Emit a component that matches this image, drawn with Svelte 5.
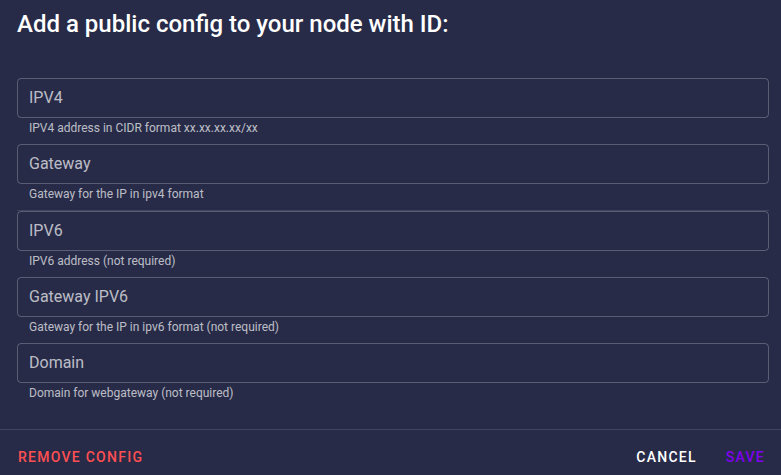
<script>
  let fields = $state([
    { id: 'ipv4', label: 'IPV4', hint: 'IPV4 address in CIDR format xx.xx.xx.xx/xx', value: '' },
    { id: 'gw4', label: 'Gateway', hint: 'Gateway for the IP in ipv4 format', value: '' },
    { id: 'ipv6', label: 'IPV6', hint: 'IPV6 address (not required)', value: '', divided: true },
    { id: 'gw6', label: 'Gateway IPV6', hint: 'Gateway for the IP in ipv6 format (not required)', value: '' },
    { id: 'domain', label: 'Domain', hint: 'Domain for webgateway (not required)', value: '' }
  ]);

  function clear() {
    for (const field of fields) field.value = '';
  }
</script>

<form class="card" onsubmit={(e) => e.preventDefault()}>
  <h1>Add a public config to your node with ID:</h1>

  <div class="fields">
    {#each fields as field (field.id)}
      {#if field.divided}<hr />{/if}
      <div class="field">
        <div class="control">
          <label for={field.id} class:filled={field.value}>{field.label}</label>
          <input id={field.id} type="text" bind:value={field.value} aria-describedby="{field.id}-hint" />
        </div>
        <p id="{field.id}-hint">{field.hint}</p>
      </div>
    {/each}
  </div>

  <footer>
    <button type="button" class="remove" onclick={clear}>Remove config</button>
    <span class="spacer"></span>
    <button type="button">Cancel</button>
    <button type="submit" class="save">Save</button>
  </footer>
</form>

<style>
  :global(body) {
    background: #272b48;
  }

  .card {
    box-sizing: border-box;
    min-height: 100vh;
    overflow: hidden;
    background: #272b48;
    color: #fff;
    font-family: Roboto, sans-serif;
  }

  h1 {
    margin: 0;
    padding: 8px 17px 38px;
    font-size: 24px;
    font-weight: 500;
    line-height: 32px;
  }

  .fields {
    padding: 0 12px 20px 17px;
  }

  hr {
    height: 1px;
    margin: 0;
    border: 0;
    background: rgba(255, 255, 255, 0.12);
  }

  .field {
    padding-bottom: 10px;
  }

  .control {
    display: grid;
    height: 40px;
    box-sizing: border-box;
    border: 1px solid rgba(255, 255, 255, 0.24);
    border-radius: 4px;
  }

  .control:focus-within {
    border-color: #fff;
  }

  label,
  input {
    grid-area: 1 / 1;
    font-size: 16px;
    line-height: 20px;
  }

  label {
    align-self: center;
    padding-left: 11px;
    color: rgba(255, 255, 255, 0.7);
    pointer-events: none;
  }

  label.filled {
    visibility: hidden;
  }

  input {
    min-width: 0;
    padding: 0 11px;
    border: 0;
    outline: 0;
    background: transparent;
    color: #fff;
    font-family: inherit;
  }

  p {
    margin: 0;
    padding: 4px 12px 0;
    font-size: 12px;
    line-height: 12px;
    color: rgba(255, 255, 255, 0.7);
  }

  footer {
    display: flex;
    align-items: center;
    gap: 7px;
    padding: 9px 5px 0 7px;
    border-top: 1px solid rgba(255, 255, 255, 0.12);
  }

  .spacer {
    flex: 1;
  }

  button {
    height: 36px;
    padding: 0 11px;
    border: 0;
    border-radius: 4px;
    background: transparent;
    color: #fff;
    font-family: inherit;
    font-size: 14px;
    font-weight: 500;
    letter-spacing: 0.09em;
    text-transform: uppercase;
    cursor: pointer;
  }

  .remove {
    color: #ff4f52;
  }

  .save {
    color: #8000f0;
  }
</style>
